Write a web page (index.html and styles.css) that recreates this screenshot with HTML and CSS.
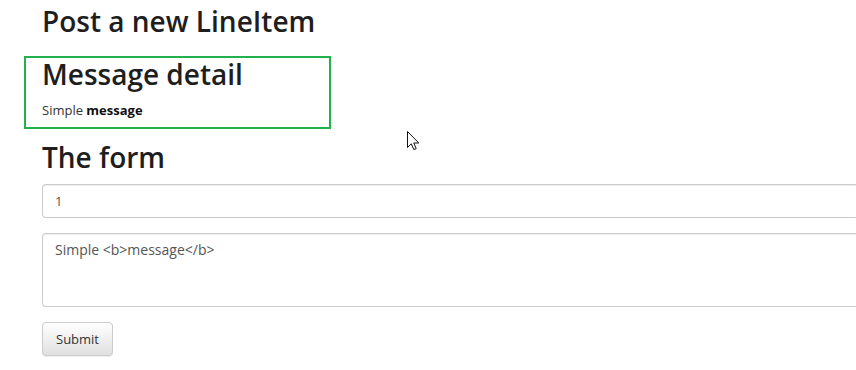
FILE: index.html
```html
<!DOCTYPE html>
<html lang="en">
<head>
    <meta charset="UTF-8">
    <meta name="viewport" content="width=device-width, initial-scale=1.0">
    <title>Post a new LineItem</title>
    <link rel="stylesheet" href="styles.css">
</head>
<body>
    <div class="page">
        <h2 class="title">Post a new LineItem</h2>

        <div class="detail-box">
            <h2 class="detail-title">Message detail</h2>
            <p class="detail-text">Simple <b>message</b></p>
        </div>

        <h2 class="form-title">The form</h2>
        <form class="line-form" action="javascript:;">
            <div class="form-group">
                <input type="text" class="form-control" value="1">
            </div>
            <div class="form-group">
                <textarea class="form-control area" rows="3">Simple &lt;b&gt;message&lt;/b&gt;</textarea>
            </div>
            <button type="submit" class="btn">Submit</button>
        </form>

        <svg class="cursor" width="13" height="20" viewBox="0 0 13 20">
            <path d="M0.5 0.5 L0.5 16.5 L4.3 12.8 L6.8 18.6 L9.2 17.6 L6.8 12 L11.8 12 Z" fill="#fff" stroke="#111" stroke-width="1" stroke-linejoin="miter"/>
        </svg>
    </div>
</body>
</html>
```

FILE: styles.css
```css
html, body {
    margin: 0;
    overflow: hidden;
}

body {
    font-family: "Open Sans", "Noto Sans", Arial, sans-serif;
    font-size: 14px;
    line-height: 20px;
    color: #333;
    background-color: #fff;
}

.page {
    position: relative;
    padding-left: 42px;
    height: 370px;
}

h2 {
    font-size: 28px;
    font-weight: 600;
    line-height: 33px;
    color: #1e1e1e;
    margin: 0;
}

.title {
    padding-top: 5px;
}

.detail-box {
    width: 287px;
    margin: 18px 0 0 -18px;
    padding: 0 0 7px 16px;
    border: 2px solid #22b14c;
}

.detail-title {
    margin-bottom: 9px;
}

.detail-text {
    margin: 0;
    font-size: 13px;
    color: #333;
}

.detail-text b {
    color: #111;
}

.form-title {
    margin-top: 12px;
    margin-bottom: 10px;
}

.form-group {
    margin-bottom: 15px;
}

/* the fields run on past the right edge of the window */
.form-control {
    display: block;
    box-sizing: border-box;
    width: 814px;
    padding: 6px 12px;
    font-family: "Open Sans", "Noto Sans", Arial, sans-serif;
    font-size: 13px;
    line-height: 20px;
    color: #555;
    background-color: #fff;
    border: 1px solid #ccc;
    border-right: none;
    border-radius: 4px 0 0 4px;
    box-shadow: inset 0 1px 1px rgba(0, 0, 0, .075);
    resize: none;
    outline: none;
}

input.form-control {
    height: 34px;
}

textarea.form-control {
    height: 74px;
}

.form-control.area {
    font-size: 14px;
}

.btn {
    display: block;
    height: 34px;
    padding: 6px 13px;
    font-family: "Open Sans", "Noto Sans", Arial, sans-serif;
    font-size: 13px;
    line-height: 20px;
    color: #333;
    background-image: linear-gradient(to bottom, #fff 0, #e0e0e0 100%);
    border: 1px solid #ccc;
    border-radius: 4px;
    box-shadow: inset 0 1px 0 rgba(255, 255, 255, .15), 0 1px 1px rgba(0, 0, 0, .075);
}

.cursor {
    position: absolute;
    left: 407px;
    top: 131px;
}
```
